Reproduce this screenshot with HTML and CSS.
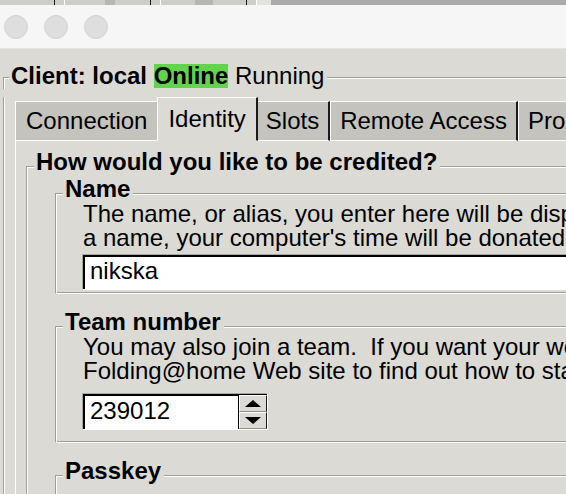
FILE: index.html
```html
<!DOCTYPE html>
<html lang="en">
<head>
    <meta charset="UTF-8">
    <meta name="viewport" content="width=device-width, initial-scale=1.0">
    <title>FAHControl - Configure</title>
    <link rel="stylesheet" href="styles.css">
</head>
<body>
    <!--Strip of the window behind-->
    <div class="dock-strip">
        <span class="dock-icon first"></span>
        <span class="dock-icon"><i class="dock-mark"></i></span>
        <span class="dock-icon"><i class="dock-mark wide"></i></span>
        <span class="dock-icon last"></span>
        <span class="dock-rest"></span>
    </div>
    <div class="titlebar">
        <span class="traffic-light"></span>
        <span class="traffic-light"></span>
        <span class="traffic-light"></span>
    </div>
    <main class="window">
        <div class="group client-group">
            <div class="group-head">
                <span class="group-title">Client: local <span class="status-online">Online</span> <span class="status-text">Running</span></span>
            </div>
            <div class="group-body client-body">
                <div class="notebook">
                    <div class="tabs">
                        <div class="tab first">Connection</div>
                        <div class="tab selected">Identity</div>
                        <div class="tab">Slots</div>
                        <div class="tab">Remote Access</div>
                        <div class="tab">Proxy</div>
                        <div class="tab">Advanced</div>
                        <div class="tab-fill"></div>
                    </div>
                    <div class="pane">
                        <div class="group credit-group">
                            <div class="group-head">
                                <span class="group-title">How would you like to be credited?</span>
                            </div>
                            <div class="group-body credit-body">
                                <div class="group field-group">
                                    <div class="group-head">
                                        <span class="group-title">Name</span>
                                    </div>
                                    <div class="group-body field-body">
                                        <p class="hint">The name, or alias, you enter here will be displayed on the Folding@home statistics pages.  If you do not choose
a name, your computer's time will be donated anonymously.</p>
                                        <div class="entry">nikska</div>
                                    </div>
                                </div>
                                <div class="group field-group">
                                    <div class="group-head">
                                        <span class="group-title">Team number</span>
                                    </div>
                                    <div class="group-body field-body team-body">
                                        <p class="hint">You may also join a team.  If you want your work units to count toward a team, visit the
Folding@home Web site to find out how to start or join a team.</p>
                                        <div class="spinbox">
                                            <div class="spin-value">239012</div>
                                            <div class="spin-buttons">
                                                <span class="spin-btn">
                                                    <svg width="16" height="7" viewBox="0 0 16 7"><polygon points="0,7 8,0 16,7" fill="#000"/></svg>
                                                </span>
                                                <span class="spin-btn">
                                                    <svg width="16" height="7" viewBox="0 0 16 7"><polygon points="0,0 16,0 8,7" fill="#000"/></svg>
                                                </span>
                                            </div>
                                        </div>
                                    </div>
                                </div>
                                <div class="group field-group">
                                    <div class="group-head">
                                        <span class="group-title">Passkey</span>
                                    </div>
                                    <div class="group-body field-body passkey-body">
                                        <p class="hint">A passkey uniquely identifies you when you use the same name as others.
Visit the Folding@home Web site to request a passkey.</p>
                                        <div class="entry"></div>
                                    </div>
                                </div>
                            </div>
                        </div>
                    </div>
                </div>
            </div>
        </div>
    </main>
</body>
</html>
```
FILE: styles.css
```css
html, body {
    height: 100%;
    overflow: hidden;
}
body {
    margin: 0;
    background-color: #dcdad5;
    color: #000;
    font-family: 'Liberation Sans', Arial, Helvetica, sans-serif;
    font-size: 24px;
}
.dock-strip {
    display: flex;
    height: 5px;
    background-color: #cfcdc8;
}
.dock-icon {
    flex: none;
    width: 85px;
    margin-left: 9px;
    border-left: 1px solid #fff;
    border-right: 1px solid #151515;
}
.dock-icon.first {
    width: 54px;
    margin-left: 0;
    border-left: none;
}
.dock-icon.last {
    width: 14px;
    border-right: none;
    background-color: #e4e2dd;
}
.dock-mark {
    display: block;
    width: 10px;
    height: 5px;
    margin-left: 40px;
    background-color: #b8b6b1;
}
.dock-mark.wide {
    width: 18px;
    margin-left: 34px;
}
.dock-rest {
    flex: 1;
    background-color: #aaaaaa;
}
.titlebar {
    display: flex;
    align-items: center;
    gap: 16px;
    height: 43px;
    padding-left: 4px;
    background-color: #f6f6f6;
    border-bottom: 1px solid #e3e3e3;
}
.traffic-light {
    width: 22px;
    height: 22px;
    border-radius: 50%;
    background-color: #dedede;
    border: 1px solid #d3d3d3;
}
.window {
    width: 900px;
    padding-left: 3px;
}

/* Tk style labelframe: groove line broken by the title */
.group-head {
    display: flex;
    height: 26px;
    line-height: 26px;
    font-weight: bold;
}
.group-head::before {
    content: "";
    width: 7px;
    margin-top: 17px;
    border-top: 1px solid #a09e99;
    border-left: 1px solid #a09e99;
    box-shadow: inset 1px 1px 0 #fff;
}
.group-head::after {
    content: "";
    flex: 1;
    margin-top: 17px;
    border-top: 1px solid #a09e99;
    box-shadow: inset 0 1px 0 #fff;
}
.group-title {
    padding: 0 3px 0 2px;
    white-space: nowrap;
}
.group-body {
    border-left: 1px solid #a09e99;
    border-bottom: 1px solid #fff;
    box-shadow: inset 1px 0 0 #fff, inset 0 -1px 0 #a09e99;
}
.client-group {
    margin-top: 14px;
}
.client-group > .group-head::before,
.client-group > .group-head::after {
    margin-top: 14px;
}
.client-group > .group-head::before {
    width: 5px;
}
.status-online {
    display: inline-block;
    line-height: 24px;
    background-color: #62d44b;
}
.status-text {
    font-weight: normal;
}
.client-body {
    padding-left: 11px;
}

/* Notebook */
.tabs {
    display: flex;
    align-items: flex-end;
    margin-top: 8px;
}
.tab {
    flex: none;
    padding: 5px 9px;
    line-height: 28px;
    white-space: nowrap;
    background-color: #c5c3be;
    border: 1px solid #fff;
    border-right: 2px solid #1a1a1a;
}
.tab.first {
    padding: 5px 10px;
}
.tab.selected {
    position: relative;
    z-index: 1;
    margin: 0 -2px;
    padding: 7px 10px;
    background-color: #dcdad5;
    border-bottom-color: #dcdad5;
}
.tab-fill {
    flex: 1;
    align-self: stretch;
    border-bottom: 1px solid #fff;
}
.pane {
    padding: 8px 0 0 10px;
    border-left: 1px solid #fff;
}
.credit-body {
    padding: 1px 0 0 28px;
}
.field-group {
    margin-bottom: 15px;
}
.field-body {
    padding: 0 0 3px 26px;
}
.team-body {
    padding-bottom: 12px;
}
.passkey-body {
    padding-top: 14px;
}
.hint {
    margin: 0;
    padding-left: 1px;
    line-height: 24px;
    white-space: pre;
}
.entry {
    box-sizing: border-box;
    height: 36px;
    margin-top: 4px;
    padding: 2px 7px 0;
    line-height: 28px;
    background-color: #fff;
    border: 1px solid;
    border-color: #a9a7a2 #fff #fff #a9a7a2;
    box-shadow: inset 2px 2px 0 #000;
}
.spinbox {
    box-sizing: border-box;
    display: flex;
    width: 186px;
    height: 37px;
    margin-top: 10px;
    background-color: #fff;
    border: 1px solid;
    border-color: #a9a7a2 #fff #fff #a9a7a2;
    box-shadow: inset 2px 2px 0 #000;
}
.spin-value {
    flex: 1;
    padding: 3px 7px 0;
    line-height: 28px;
}
.spin-buttons {
    display: flex;
    flex-direction: column;
    width: 28px;
    border-left: 1px solid #000;
    border-top: 1px solid #000;
}
.spin-btn {
    flex: 1;
    display: flex;
    align-items: center;
    justify-content: center;
    background-color: #dcdad5;
    border-top: 1px solid #fff;
    border-left: 1px solid #fff;
    border-right: 1px solid #1a1a1a;
    border-bottom: 1px solid #8f8d88;
}
```
